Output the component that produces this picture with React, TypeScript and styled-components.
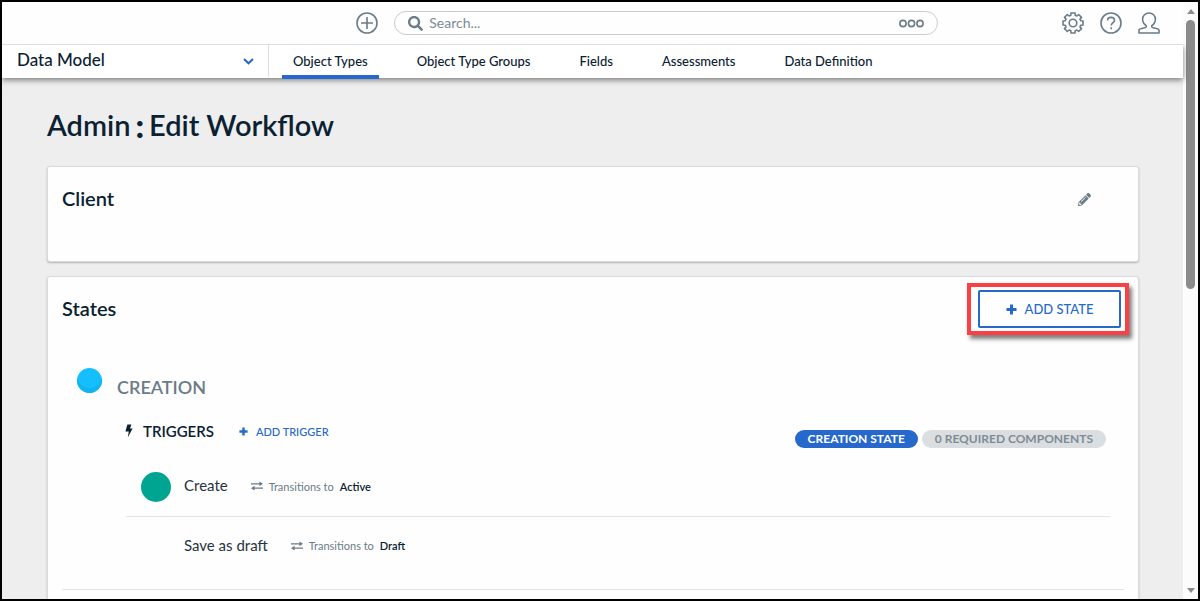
import React from "react";
import styled, { createGlobalStyle } from "styled-components";
import { FaSearch, FaPencilAlt } from "react-icons/fa";

const ink = "#0b2132";
const slate = "#6b7b87";
const blue = "#2668cb";
const line = "#dcdfe2";

const GlobalStyle = createGlobalStyle`
  *, *::before, *::after { box-sizing: border-box; }
  body {
    margin: 0;
    color: ${ink};
    background: #eee;
    font-family: Lato, "Open Sans", sans-serif;
    font-size: 13px;
  }
  h1, h2, h3, h4, ul, p { margin: 0; padding: 0; }
  button, input, select { font: inherit; color: inherit; }
  svg { display: block; flex: none; }
`;

const Frame = styled.div`
  display: flex;
  height: 100vh;
  border: 2px solid #000;
  overflow: hidden;
`;

const Page = styled.div`
  display: flex;
  flex-direction: column;
  flex: 1;
  min-width: 0;
`;

const TopBar = styled.header`
  position: relative;
  z-index: 1;
  display: grid;
  grid-template-columns: 30% minmax(0, 1fr) 245px;
  align-items: center;
  height: 43px;
  flex: none;
  background: #fefefe;
  border-bottom: 1px solid ${line};
  color: ${slate};
`;

const SearchArea = styled.div`
  grid-column: 2;
  display: flex;
  align-items: center;
  gap: 16px;
`;

const IconButton = styled.button`
  display: flex;
  align-items: center;
  justify-content: center;
  padding: 0;
  border: 0;
  background: none;
  color: ${slate};
  cursor: pointer;
`;

const SearchBox = styled.label`
  display: flex;
  align-items: center;
  gap: 6px;
  flex: 1;
  height: 24px;
  padding: 0 13px;
  border: 1px solid #c9cccf;
  border-radius: 12px;
`;

const SearchInput = styled.input`
  flex: 1;
  min-width: 0;
  padding: 0;
  border: 0;
  outline: 0;
  background: none;
  font-size: 14px;
  line-height: 20px;
  &::placeholder { color: #7d8a94; opacity: 1; }
`;

const UserTools = styled.div`
  display: flex;
  justify-content: flex-end;
  gap: 16px;
  padding-right: 23px;
`;

const NavBar = styled.nav`
  position: relative;
  display: flex;
  height: 33px;
  flex: none;
  background: #fff;
  box-shadow: 0 2px 6px rgba(0, 0, 0, 0.5);
`;

const ModulePicker = styled.label`
  display: grid;
  width: 267px;
  margin-bottom: 1px;
  align-items: center;
  border-right: 1px solid ${line};
`;

const ModuleSelect = styled.select`
  grid-area: 1 / 1;
  height: 32px;
  padding: 0 15px 3px;
  border: 0;
  background: none;
  appearance: none;
  font-size: 17px;
  font-weight: 500;
`;

const Chevron = styled.svg`
  grid-area: 1 / 1;
  justify-self: end;
  margin-right: 14px;
  pointer-events: none;
`;

const Tabs = styled.div`
  display: flex;
  gap: 27px;
  padding-left: 13px;
`;

const Tab = styled.a<{ $active?: boolean }>`
  height: 34px;
  padding: 0 11px;
  border-bottom: 4px solid ${(p) => (p.$active ? blue : "transparent")};
  font-weight: 500;
  line-height: 33px;
  color: ${ink};
  text-decoration: none;
  white-space: nowrap;
`;

const Content = styled.main`
  flex: 1;
  min-height: 0;
  padding: 30px 44px 0 45px;
  overflow: hidden;
  background: #eee;
`;

const Title = styled.h1`
  display: flex;
  gap: 5px;
  margin-bottom: 24px;
  font-size: 29px;
  font-weight: 600;
  line-height: 34px;
`;

const TitleColon = styled.span`
  font-size: 33px;
  font-weight: 900;
`;

const Card = styled.section<{ $body: number }>`
  margin-bottom: 14px;
  padding: 13px 17px ${(p) => p.$body}px 14px;
  border: 1px solid #d9dbdd;
  border-radius: 3px;
  background: #fefefe;
  box-shadow: 0 1px 2px rgba(0, 0, 0, 0.25);
`;

const CardHeader = styled.header`
  display: flex;
  align-items: center;
  justify-content: space-between;
  height: 38px;
`;

const CardTitle = styled.h2`
  padding-bottom: 2px;
  font-size: 20px;
  font-weight: 600;
  line-height: 24px;
`;

const EditButton = styled(IconButton)`
  margin-right: 30px;
`;

const Highlight = styled.div`
  position: relative;
  &::after {
    content: "";
    position: absolute;
    inset: -7px -8px -7px -11px;
    border: 4px solid #fb4045;
    box-shadow: 3px 4px 4px rgba(0, 0, 0, 0.5);
    pointer-events: none;
  }
`;

const AddStateButton = styled.button`
  display: flex;
  align-items: center;
  justify-content: center;
  gap: 8px;
  width: 143px;
  height: 38px;
  padding: 0;
  border: 2px solid ${blue};
  border-radius: 2px;
  background: #fff;
  color: ${blue};
  font-weight: 500;
  cursor: pointer;
`;

const State = styled.section`
  display: flex;
  gap: 15px;
  margin: 40px -3px 0 0;
  padding: 0 0 13px 15px;
  border-bottom: 1px solid #e2e3e4;
`;

const StateDot = styled.span`
  width: 25px;
  height: 25px;
  flex: none;
  border-radius: 50%;
  background: #14beff;
  box-shadow: inset 0 -5px 0 #10b5f0;
`;

const StateBody = styled.div`
  flex: 1;
  min-width: 0;
`;

const StateName = styled.h3`
  padding-top: 7px;
  font-size: 18px;
  font-weight: 600;
  line-height: 24px;
  color: ${slate};
`;

const TriggerHeader = styled.div`
  display: flex;
  align-items: center;
  height: 34px;
  margin-top: 15px;
  padding: 0 18px 0 8px;
`;

const TriggerTitle = styled.h4`
  display: flex;
  align-items: center;
  gap: 10px;
  margin-right: 25px;
  font-size: 15px;
  font-weight: 600;
  line-height: 16px;
`;

const AddTriggerButton = styled.button`
  display: flex;
  align-items: center;
  gap: 8px;
  padding: 0;
  border: 0;
  background: none;
  color: ${blue};
  font-size: 11px;
  font-weight: 500;
  cursor: pointer;
`;

const Badges = styled.div`
  display: flex;
  gap: 4px;
  margin-left: auto;
  align-self: flex-end;
`;

const Badge = styled.span<{ $solid?: boolean }>`
  padding: 0 13px;
  border-radius: 9px;
  background: ${(p) => (p.$solid ? blue : "#dadee1")};
  color: ${(p) => (p.$solid ? "#fff" : "#7f8b95")};
  font-size: 12px;
  font-weight: 700;
  line-height: 18px;
  white-space: nowrap;
`;

const TriggerList = styled.ul`
  margin: 10px 14px 0 9px;
  list-style: none;
`;

const TriggerRow = styled.li`
  display: flex;
  align-items: center;
  gap: 13px;
  height: 59px;
  padding-left: 15px;
  border-bottom: 1px solid #e2e3e4;
  &:last-child { border-bottom: 0; }
`;

const TriggerDot = styled.span<{ $color?: string }>`
  width: 30px;
  height: 30px;
  flex: none;
  border-radius: 50%;
  background: ${(p) => p.$color ?? "transparent"};
`;

const TriggerText = styled.div`
  display: flex;
  align-items: baseline;
  gap: 23px;
  padding-bottom: 4px;
`;

const TriggerName = styled.span`
  font-size: 15px;
  line-height: 20px;
  color: #26343f;
`;

const Transition = styled.span`
  display: flex;
  align-items: center;
  gap: 6px;
  font-size: 11px;
  color: ${slate};
`;

const Target = styled.strong`
  font-weight: 600;
  color: ${ink};
`;

const ScrollBar = styled.div`
  display: flex;
  flex-direction: column;
  align-items: center;
  justify-content: space-between;
  width: 15px;
  flex: none;
  padding: 7px 0 6px;
  background: #fcfcfc;
  color: #8b8b8b;
`;

const ScrollThumb = styled.div`
  width: 9px;
  height: 46%;
  margin: 6px 0 auto;
  border-radius: 5px;
  background: #8b8b8b;
`;

const gearPath = (() => {
  const points: string[] = [];
  for (let i = 0; i < 8; i++) {
    const base = (i * Math.PI) / 4;
    for (const [offset, radius] of [[-0.28, 8], [-0.2, 10.2], [0.2, 10.2], [0.28, 8]]) {
      const a = base + offset;
      points.push(`${(11 + radius * Math.sin(a)).toFixed(2)} ${(11 - radius * Math.cos(a)).toFixed(2)}`);
    }
  }
  return `M${points.join("L")}Z`;
})();

const LineIcon = ({ children }: { children: React.ReactNode }) => (
  <svg width="22" height="22" viewBox="0 0 22 22" fill="none" stroke="currentColor" strokeWidth="1.6" strokeLinejoin="round" aria-hidden="true">
    {children}
  </svg>
);

const PlusIcon = ({ size }: { size: number }) => (
  <svg width={size} height={size} viewBox="0 0 11 11" fill="currentColor" aria-hidden="true">
    <path d="M4 0.5H7V4H10.500V7H7V10.500H4V7H0.500V4H4Z" />
  </svg>
);

const BoltIcon = () => (
  <svg width="8" height="14" viewBox="0 0 8 14" fill="currentColor" aria-hidden="true">
    <path d="M2.4 0.5 6.4 0.5 5 4.4 7.6 4.4 2.8 13.5 3.8 7.4 0.4 7.4Z" />
  </svg>
);

const TransferIcon = () => (
  <svg width="12" height="10" viewBox="0 0 12 10" aria-hidden="true">
    <path d="M0 2.8H9M3 7.2H12" stroke="currentColor" strokeWidth="1.2" />
    <path d="M8.4 0.4 12 2.8 8.4 5.2ZM3.6 4.8 0 7.2 3.6 9.6Z" fill="currentColor" />
  </svg>
);

const tabs = ["Object Types", "Object Type Groups", "Fields", "Assessments", "Data Definition"];

const triggers = [
  { name: "Create", target: "Active", color: "#00a591" },
  { name: "Save as draft", target: "Draft" },
];

export default function App() {
  return (
    <Frame>
      <GlobalStyle />
      <Page>
        <TopBar>
          <SearchArea>
            <IconButton aria-label="Create new">
              <LineIcon>
                <circle cx="11" cy="11" r="10" />
                <path d="M11 5v12M5 11h12" />
              </LineIcon>
            </IconButton>
            <SearchBox>
              <FaSearch size={15} aria-hidden="true" />
              <SearchInput type="text" placeholder="Search..." aria-label="Search" />
              <IconButton type="button" aria-label="More search options">
                <svg width="25" height="9" viewBox="0 0 25 9" fill="none" stroke="currentColor" strokeWidth="1.6" aria-hidden="true">
                  <circle cx="4" cy="4.5" r="3.1" />
                  <circle cx="12.5" cy="4.5" r="3.1" />
                  <circle cx="21" cy="4.5" r="3.1" />
                </svg>
              </IconButton>
            </SearchBox>
          </SearchArea>
          <UserTools>
            <IconButton aria-label="Settings">
              <LineIcon>
                <path d={gearPath} />
                <circle cx="11" cy="11" r="3.8" />
              </LineIcon>
            </IconButton>
            <IconButton aria-label="Help">
              <LineIcon>
                <circle cx="11" cy="11" r="10" />
                <path d="M7.6 8.6C7.6 6.4 9 5.4 11 5.4S14.5 6.6 14.5 8.4C14.5 10.6 11.2 10.8 11.2 13.6" />
                <path d="M11.2 15.2v2" />
              </LineIcon>
            </IconButton>
            <IconButton aria-label="Account">
              <LineIcon>
                <path d="M8.2 13.6C6 12.2 4.600 9.800 4.600 7.200 4.600 3.600 7.400 1 11 1S17.400 3.600 17.400 7.200C17.400 9.800 16 12.200 13.800 13.600 13.400 15 14 15.600 16 16 19 16.600 21 16.800 21 18V21H1V18C1 16.800 3 16.600 6 16 8 15.600 8.600 15 8.200 13.600Z" />
              </LineIcon>
            </IconButton>
          </UserTools>
        </TopBar>

        <NavBar>
          <ModulePicker>
            <ModuleSelect aria-label="Module">
              <option>Data Model</option>
            </ModuleSelect>
            <Chevron width="11" height="7" viewBox="0 0 11 7" fill="none" stroke={blue} strokeWidth="2" aria-hidden="true">
              <path d="M1 1 5.500 5.300 10 1" />
            </Chevron>
          </ModulePicker>
          <Tabs>
            {tabs.map((tab, i) => (
              <Tab key={tab} href="#" $active={i === 0}>{tab}</Tab>
            ))}
          </Tabs>
        </NavBar>

        <Content>
          <Title>
            <span>Admin</span>
            <TitleColon>:</TitleColon>
            <span>Edit Workflow</span>
          </Title>

          <Card $body={43}>
            <CardHeader>
              <CardTitle>Client</CardTitle>
              <EditButton aria-label="Edit client">
                <FaPencilAlt size={13} aria-hidden="true" />
              </EditButton>
            </CardHeader>
          </Card>

          <Card $body={60}>
            <CardHeader>
              <CardTitle>States</CardTitle>
              <Highlight>
                <AddStateButton>
                  <PlusIcon size={11} />
                  ADD STATE
                </AddStateButton>
              </Highlight>
            </CardHeader>

            <State>
              <StateDot />
              <StateBody>
                <StateName>CREATION</StateName>
                <TriggerHeader>
                  <TriggerTitle>
                    <BoltIcon />
                    TRIGGERS
                  </TriggerTitle>
                  <AddTriggerButton>
                    <PlusIcon size={9} />
                    ADD TRIGGER
                  </AddTriggerButton>
                  <Badges>
                    <Badge $solid>CREATION STATE</Badge>
                    <Badge>0 REQUIRED COMPONENTS</Badge>
                  </Badges>
                </TriggerHeader>
                <TriggerList>
                  {triggers.map((t) => (
                    <TriggerRow key={t.name}>
                      <TriggerDot $color={t.color} />
                      <TriggerText>
                        <TriggerName>{t.name}</TriggerName>
                        <Transition>
                          <TransferIcon />
                          Transitions to
                          <Target>{t.target}</Target>
                        </Transition>
                      </TriggerText>
                    </TriggerRow>
                  ))}
                </TriggerList>
              </StateBody>
            </State>
          </Card>
        </Content>
      </Page>

      <ScrollBar aria-hidden="true">
        <svg width="8" height="5" viewBox="0 0 8 5" fill="currentColor"><path d="M0 5 4 0 8 5Z" /></svg>
        <ScrollThumb />
        <svg width="8" height="5" viewBox="0 0 8 5" fill="currentColor"><path d="M0 0H8L4 5Z" /></svg>
      </ScrollBar>
    </Frame>
  );
}
